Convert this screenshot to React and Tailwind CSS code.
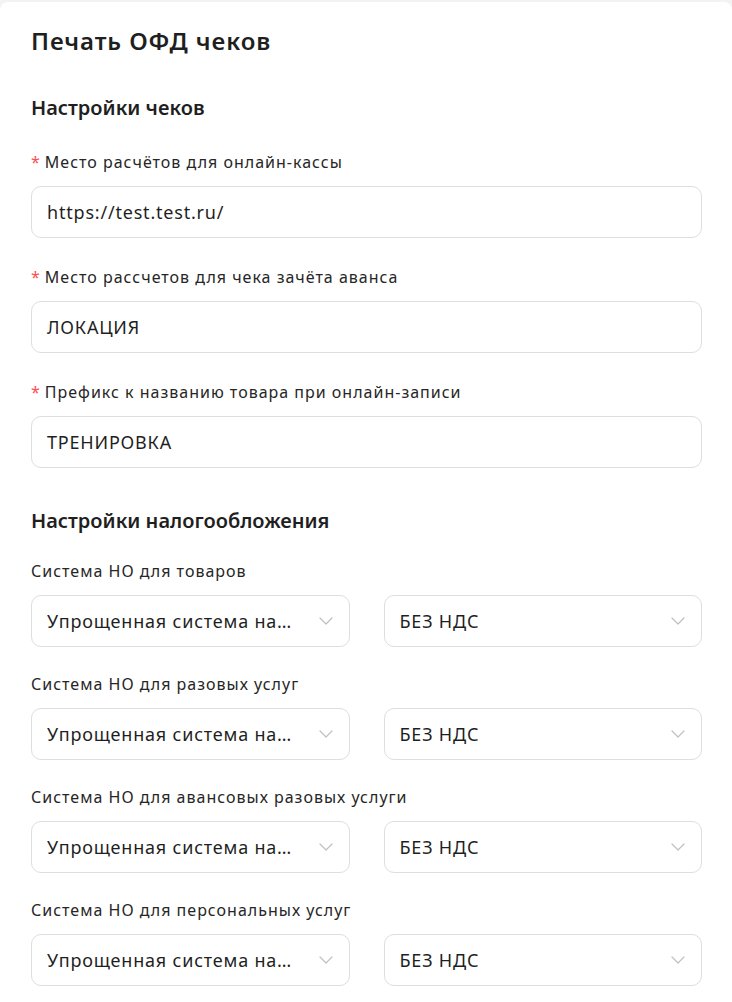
import React from 'react';

const Chevron = () => (
  <svg width="14" height="8" viewBox="0 0 14 8" fill="none" className="shrink-0">
    <path d="M1 1l6 6 6-6" stroke="#bfbfbf" strokeWidth="1.2" strokeLinecap="round" strokeLinejoin="round" />
  </svg>
);

const TextField = ({ label, value }) => (
  <div className="mb-[27px]">
    <div className="flex items-center h-6 mb-3 text-[16px] tracking-[1px] text-[#262626]">
      <span className="text-[#ff4d4f] mr-1 text-[16px]">*</span>
      {label}
    </div>
    <div className="h-[52px] rounded-[10px] border border-[#dedede] pl-[15px] pr-4 flex items-center text-[18px] tracking-[0.8px] text-[#1f1f1f]">
      {value}
    </div>
  </div>
);

const Select = ({ value }) => (
  <div className="h-[52px] rounded-[10px] border border-[#dedede] pl-[15px] pr-4 flex items-center justify-between text-[18px] tracking-[0.8px] text-[#1f1f1f] min-w-0">
    <span className="truncate pr-[18px]">{value}</span>
    <Chevron />
  </div>
);

const TaxRow = ({ label }) => (
  <div className="mb-[25px]">
    <div className="h-6 mb-3 flex items-center text-[16px] tracking-[1px] text-[#262626]">{label}</div>
    <div className="grid grid-cols-2 gap-[34px]">
      <Select value="Упрощенная система налогообложения" />
      <Select value="БЕЗ НДС" />
    </div>
  </div>
);

export default function App() {
  const fields = [
    { label: 'Место расчётов для онлайн-кассы', value: 'https://test.test.ru/' },
    { label: 'Место рассчетов для чека зачёта аванса', value: 'ЛОКАЦИЯ' },
    { label: 'Префикс к названию товара при онлайн-записи', value: 'ТРЕНИРОВКА' },
  ];
  const taxes = [
    'Система НО для товаров',
    'Система НО для разовых услуг',
    'Система НО для авансовых разовых услуги',
    'Система НО для персональных услуг',
  ];

  return (
    <div className="min-h-screen bg-[#f3f3f3] pt-[2px] font-['Noto_Sans',sans-serif]">
      <div className="bg-white rounded-t-[8px] min-h-[1000px] pl-[31px] pr-[30px] pt-[23px]">
        <h1 className="text-[24px] font-semibold tracking-[0.9px] text-[#1f1f1f] leading-8 mb-[37px]">Печать ОФД чеков</h1>
        <h2 className="text-[20px] font-semibold text-[#1f1f1f] leading-7 mb-[28px]">Настройки чеков</h2>
        {fields.map((f, i) => (
          <TextField key={i} label={f.label} value={f.value} />
        ))}
        <h2 className="text-[20px] font-semibold text-[#1f1f1f] leading-7 mb-[24px] mt-[39px]">Настройки налогообложения</h2>
        {taxes.map((t, i) => (
          <TaxRow key={i} label={t} />
        ))}
      </div>
    </div>
  );
}
